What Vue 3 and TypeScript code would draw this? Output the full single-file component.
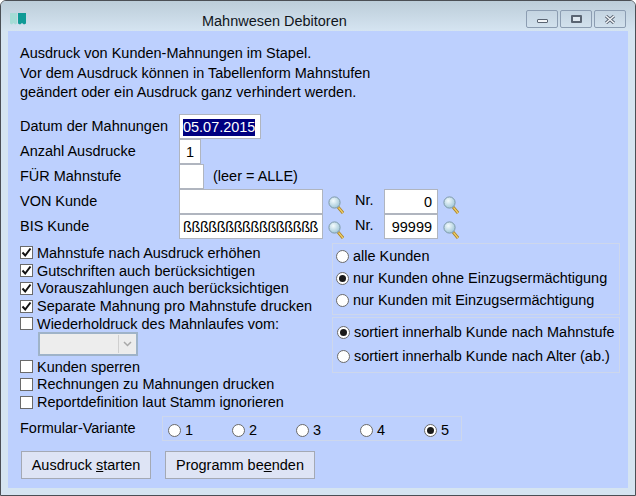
<script setup lang="ts">
const intro: string[] = [
  'Ausdruck von Kunden-Mahnungen im Stapel.',
  'Vor dem Ausdruck können in Tabellenform Mahnstufen',
  'geändert oder ein Ausdruck ganz verhindert werden.',
]
const checksA = [
  { label: 'Mahnstufe nach Ausdruck erhöhen', on: true },
  { label: 'Gutschriften auch berücksichtigen', on: true },
  { label: 'Vorauszahlungen auch berücksichtigen', on: true },
  { label: 'Separate Mahnung pro Mahnstufe drucken', on: true },
  { label: 'Wiederholdruck des Mahnlaufes vom:', on: false },
]
const checksB = [
  { label: 'Kunden sperren', on: false },
  { label: 'Rechnungen zu Mahnungen drucken', on: false },
  { label: 'Reportdefinition laut Stamm ignorieren', on: false },
]
const kunden = [
  { label: 'alle Kunden', on: false },
  { label: 'nur Kunden ohne Einzugsermächtigung', on: true },
  { label: 'nur Kunden mit Einzugsermächtigung', on: false },
]
const sort = [
  { label: 'sortiert innerhalb Kunde nach Mahnstufe', on: true },
  { label: 'sortiert innerhalb Kunde nach Alter (ab.)', on: false },
]
const varianten = [
  { label: '1', on: false },
  { label: '2', on: false },
  { label: '3', on: false },
  { label: '4', on: false },
  { label: '5', on: true },
]
</script>

<template>
  <div class="window">
    <svg width="0" height="0" class="defs">
      <defs>
        <radialGradient id="glass" cx="0.4" cy="0.35" r="0.7">
          <stop offset="0" stop-color="#f4fbfd" />
          <stop offset="1" stop-color="#9cc4d6" />
        </radialGradient>
        <symbol id="lens" viewBox="0 0 16 19">
          <path d="M10 11 15 17" stroke="#a98226" stroke-width="3" />
          <path d="M10.500 11.500 15 17" stroke="#f0cf6a" stroke-width="1.200" />
          <circle cx="6.500" cy="6.500" r="5.600" fill="url(#glass)" stroke="#7f9aa8" stroke-width="1" />
        </symbol>
      </defs>
    </svg>
    <header class="titlebar">
      <svg class="appicon" width="16" height="12" viewBox="0 0 16 12">
        <path d="M0 0h7v10.500L5.200 11.500 3.500 10 1.800 11.500 0 10.500z" fill="#a5dcd6" />
        <path d="M8 0h8v10.500L14 11.500 12 10 10 11.500 8 10.500z" fill="#0f9a96" />
      </svg>
      <div class="title">Mahnwesen Debitoren</div>
      <div class="caption">
        <div class="capbtn">
          <span class="ic-min"></span>
        </div>
        <div class="capbtn">
          <span class="ic-max"></span>
        </div>
        <div class="capbtn">
          <svg class="ic-close" width="12" height="9" viewBox="0 0 12 9">
            <path d="M2 1 10 8M10 1 2 8" stroke="#5a6472" stroke-width="3.200" />
            <path d="M2 1 10 8M10 1 2 8" stroke="#f2f5f8" stroke-width="1.400" />
          </svg>
        </div>
      </div>
    </header>

    <main class="content">
      <p v-for="line in intro" :key="line" class="intro">{{ line }}</p>

      <div class="fields">
        <div class="row">
          <label class="flabel">Datum der Mahnungen</label>
          <div class="input w-date"><span class="selected">05.07.2015</span></div>
        </div>
        <div class="row">
          <label class="flabel">Anzahl Ausdrucke</label>
          <div class="input w-one center">1</div>
        </div>
        <div class="row">
          <label class="flabel">FÜR Mahnstufe</label>
          <div class="input w-stufe"></div>
          <span class="hint">(leer = ALLE)</span>
        </div>
        <div class="row">
          <label class="flabel">VON Kunde</label>
          <div class="input w-kunde"></div>
          <svg class="lens"><use href="#lens" /></svg>
          <span class="nr">Nr.</span>
          <div class="input w-nr right">0</div>
          <svg class="lens"><use href="#lens" /></svg>
        </div>
        <div class="row">
          <label class="flabel">BIS Kunde</label>
          <div class="input w-kunde tight">ßßßßßßßßßßßßßßßß</div>
          <svg class="lens"><use href="#lens" /></svg>
          <span class="nr">Nr.</span>
          <div class="input w-nr right">99999</div>
          <svg class="lens"><use href="#lens" /></svg>
        </div>
      </div>

      <div class="columns">
        <div class="left">
          <div v-for="c in checksA" :key="c.label" class="check">
            <span class="box">
              <svg v-if="c.on" width="11" height="11" viewBox="0 0 11 11">
                <path d="M1.500 5.500 4.200 8.500 9.500 1.500" fill="none" stroke="#111" stroke-width="2" />
              </svg>
            </span>
            <span>{{ c.label }}</span>
          </div>
          <div class="combo">
            <span class="combo-btn">
              <svg width="9" height="6" viewBox="0 0 9 6">
                <path d="M1 1 4.500 4.500 8 1" fill="none" stroke="#a8a8a8" stroke-width="1.500" />
              </svg>
            </span>
          </div>
          <div v-for="c in checksB" :key="c.label" class="check">
            <span class="box"></span>
            <span>{{ c.label }}</span>
          </div>
        </div>

        <div class="right-col">
          <div class="group g-kunden">
            <div v-for="r in kunden" :key="r.label" class="radio">
              <span class="dot" :class="{ on: r.on }"></span>
              <span>{{ r.label }}</span>
            </div>
          </div>
          <div class="group g-sort">
            <div v-for="r in sort" :key="r.label" class="radio">
              <span class="dot" :class="{ on: r.on }"></span>
              <span>{{ r.label }}</span>
            </div>
          </div>
        </div>
      </div>

      <div class="variant">
        <span class="vlabel">Formular-Variante</span>
        <div class="group vgroup">
          <div v-for="r in varianten" :key="r.label" class="radio vradio">
            <span class="dot" :class="{ on: r.on }"></span>
            <span>{{ r.label }}</span>
          </div>
        </div>
      </div>

      <div class="buttons">
        <button class="btn b-start" type="button">Ausdruck <u>s</u>tarten</button>
        <button class="btn b-end" type="button">Programm be<u>e</u>nden</button>
      </div>
    </main>
  </div>
</template>

<style scoped>
.defs {
  position: absolute;
}
.window {
  box-sizing: border-box;
  width: 636px;
  height: 496px;
  display: flex;
  flex-direction: column;
  padding: 0 7px 7px;
  border: 1px solid #4b4f55;
  border-radius: 6px 6px 0 0;
  background: #d5e4f1;
  font-family: "Liberation Sans", Arial, sans-serif;
  font-size: 14.47px;
  color: #000;
  overflow: hidden;
}
.titlebar {
  position: relative;
  flex: none;
  height: 30px;
  margin: 0 -7px;
  padding: 0 7px;
  display: flex;
  align-items: flex-start;
  background: linear-gradient(#bccdd9, #d5e4f1);
}
.appicon {
  flex: none;
  margin: 12px 0 0 2px;
}
.title {
  flex: 1;
  padding: 12px 0 0 176px;
  line-height: 17px;
  color: #10161c;
}
.caption {
  display: flex;
  gap: 2px;
  margin: 9px 2px 0 0;
}
.capbtn {
  box-sizing: border-box;
  width: 32px;
  height: 18px;
  display: flex;
  align-items: center;
  justify-content: center;
  border: 1px solid #8c9db2;
  border-radius: 2px;
  background: linear-gradient(#c4d4e1, #d2e1ed);
}
.ic-min {
  display: block;
  width: 11px;
  height: 4px;
  margin-top: 4px;
  box-sizing: border-box;
  border: 1px solid #5a6472;
  background: #f2f5f8;
  border-radius: 1px;
}
.ic-max {
  display: block;
  width: 11px;
  height: 8px;
  box-sizing: border-box;
  border: 2px solid #5a6472;
  background: #dfe8f0;
  border-radius: 1px;
}
.content {
  flex: 1;
  background: #bdd0fe;
  padding: 13px 0 0 12px;
  min-height: 0;
}
.intro {
  margin: 0;
  line-height: 19.5px;
}
.fields {
  margin-top: 11.5px;
  display: flex;
  flex-direction: column;
}
.row {
  display: flex;
  align-items: flex-start;
  height: 25px;
}
.flabel {
  flex: none;
  width: 159px;
  line-height: 24px;
}
.input {
  box-sizing: border-box;
  height: 25px;
  line-height: 22px;
  padding: 1px 3px 0;
  background: #fff;
  border: 1px solid #b0b5bf;
  white-space: nowrap;
}
.w-date { width: 82px; }
.w-one { width: 22px; }
.w-stufe { width: 25px; }
.w-kunde { width: 144px; }
.w-nr { width: 54px; }
.center { text-align: center; }
.right {
  text-align: right;
  padding-right: 5px;
}
.tight { letter-spacing: -0.4px; }
.selected {
  display: inline-block;
  background: #000080;
  color: #fff;
  line-height: 17px;
}
.hint {
  margin-left: 9px;
  line-height: 24px;
}
.lens {
  flex: none;
  width: 16px;
  height: 19px;
  margin: 7px 0 0 5px;
}
.nr {
  width: 40px;
  padding-left: 11px;
  box-sizing: border-box;
  line-height: 22px;
}
.columns {
  display: flex;
  margin-top: 4px;
}
.left {
  flex: none;
  width: 312px;
  padding-top: 1px;
}
.check {
  display: flex;
  align-items: center;
  height: 17.75px;
  line-height: 18px;
  white-space: nowrap;
}
.box {
  box-sizing: border-box;
  flex: none;
  width: 13px;
  height: 13px;
  margin-right: 4px;
  border: 1px solid #6a6a6a;
  background: #fff;
  display: flex;
  align-items: center;
  justify-content: center;
}
.combo {
  box-sizing: border-box;
  position: relative;
  width: 100px;
  height: 24px;
  margin: -1px 0 2px 18px;
  background: #ededed;
  border: 2px solid #9fb3c8;
}
.combo-btn {
  position: absolute;
  top: 1px;
  right: 1px;
  bottom: 1px;
  width: 16px;
  display: flex;
  align-items: center;
  justify-content: center;
  background: #ececec;
  border-left: 1px solid #cfcfcf;
}
.right-col {
  display: flex;
  flex-direction: column;
  gap: 2px;
}
.group {
  box-sizing: border-box;
  border: 1px solid #cdd7ec;
}
.g-kunden {
  width: 288px;
  height: 72px;
  padding: 1px 3px;
}
.g-sort {
  width: 288px;
  height: 56px;
  padding: 2px 4px;
}
.radio {
  display: flex;
  align-items: center;
  white-space: nowrap;
  height: 22px;
}
.g-sort .radio {
  height: 24px;
}
.dot {
  box-sizing: border-box;
  flex: none;
  width: 13px;
  height: 13px;
  margin-right: 4px;
  border-radius: 50%;
  border: 1px solid #6a6a6a;
  background: #fff;
  display: flex;
  align-items: center;
  justify-content: center;
}
.dot.on::after {
  content: "";
  width: 7px;
  height: 7px;
  border-radius: 50%;
  background: #1a1a1a;
}
.variant {
  display: flex;
  align-items: flex-start;
  margin-top: 5px;
}
.vlabel {
  flex: none;
  width: 142px;
  line-height: 24px;
}
.vgroup {
  width: 300px;
  height: 25px;
  display: flex;
  padding: 2px 0 0 5px;
}
.vradio {
  width: 64px;
  flex: none;
}
.buttons {
  display: flex;
  gap: 14px;
  margin: 10px 0 0 1px;
}
.btn {
  box-sizing: border-box;
  height: 28px;
  padding: 0;
  font: inherit;
  color: #000;
  background: #dee4f5;
  border: 1px solid #a4a9b4;
}
.b-start { width: 130px; }
.b-end { width: 150px; }
</style>
